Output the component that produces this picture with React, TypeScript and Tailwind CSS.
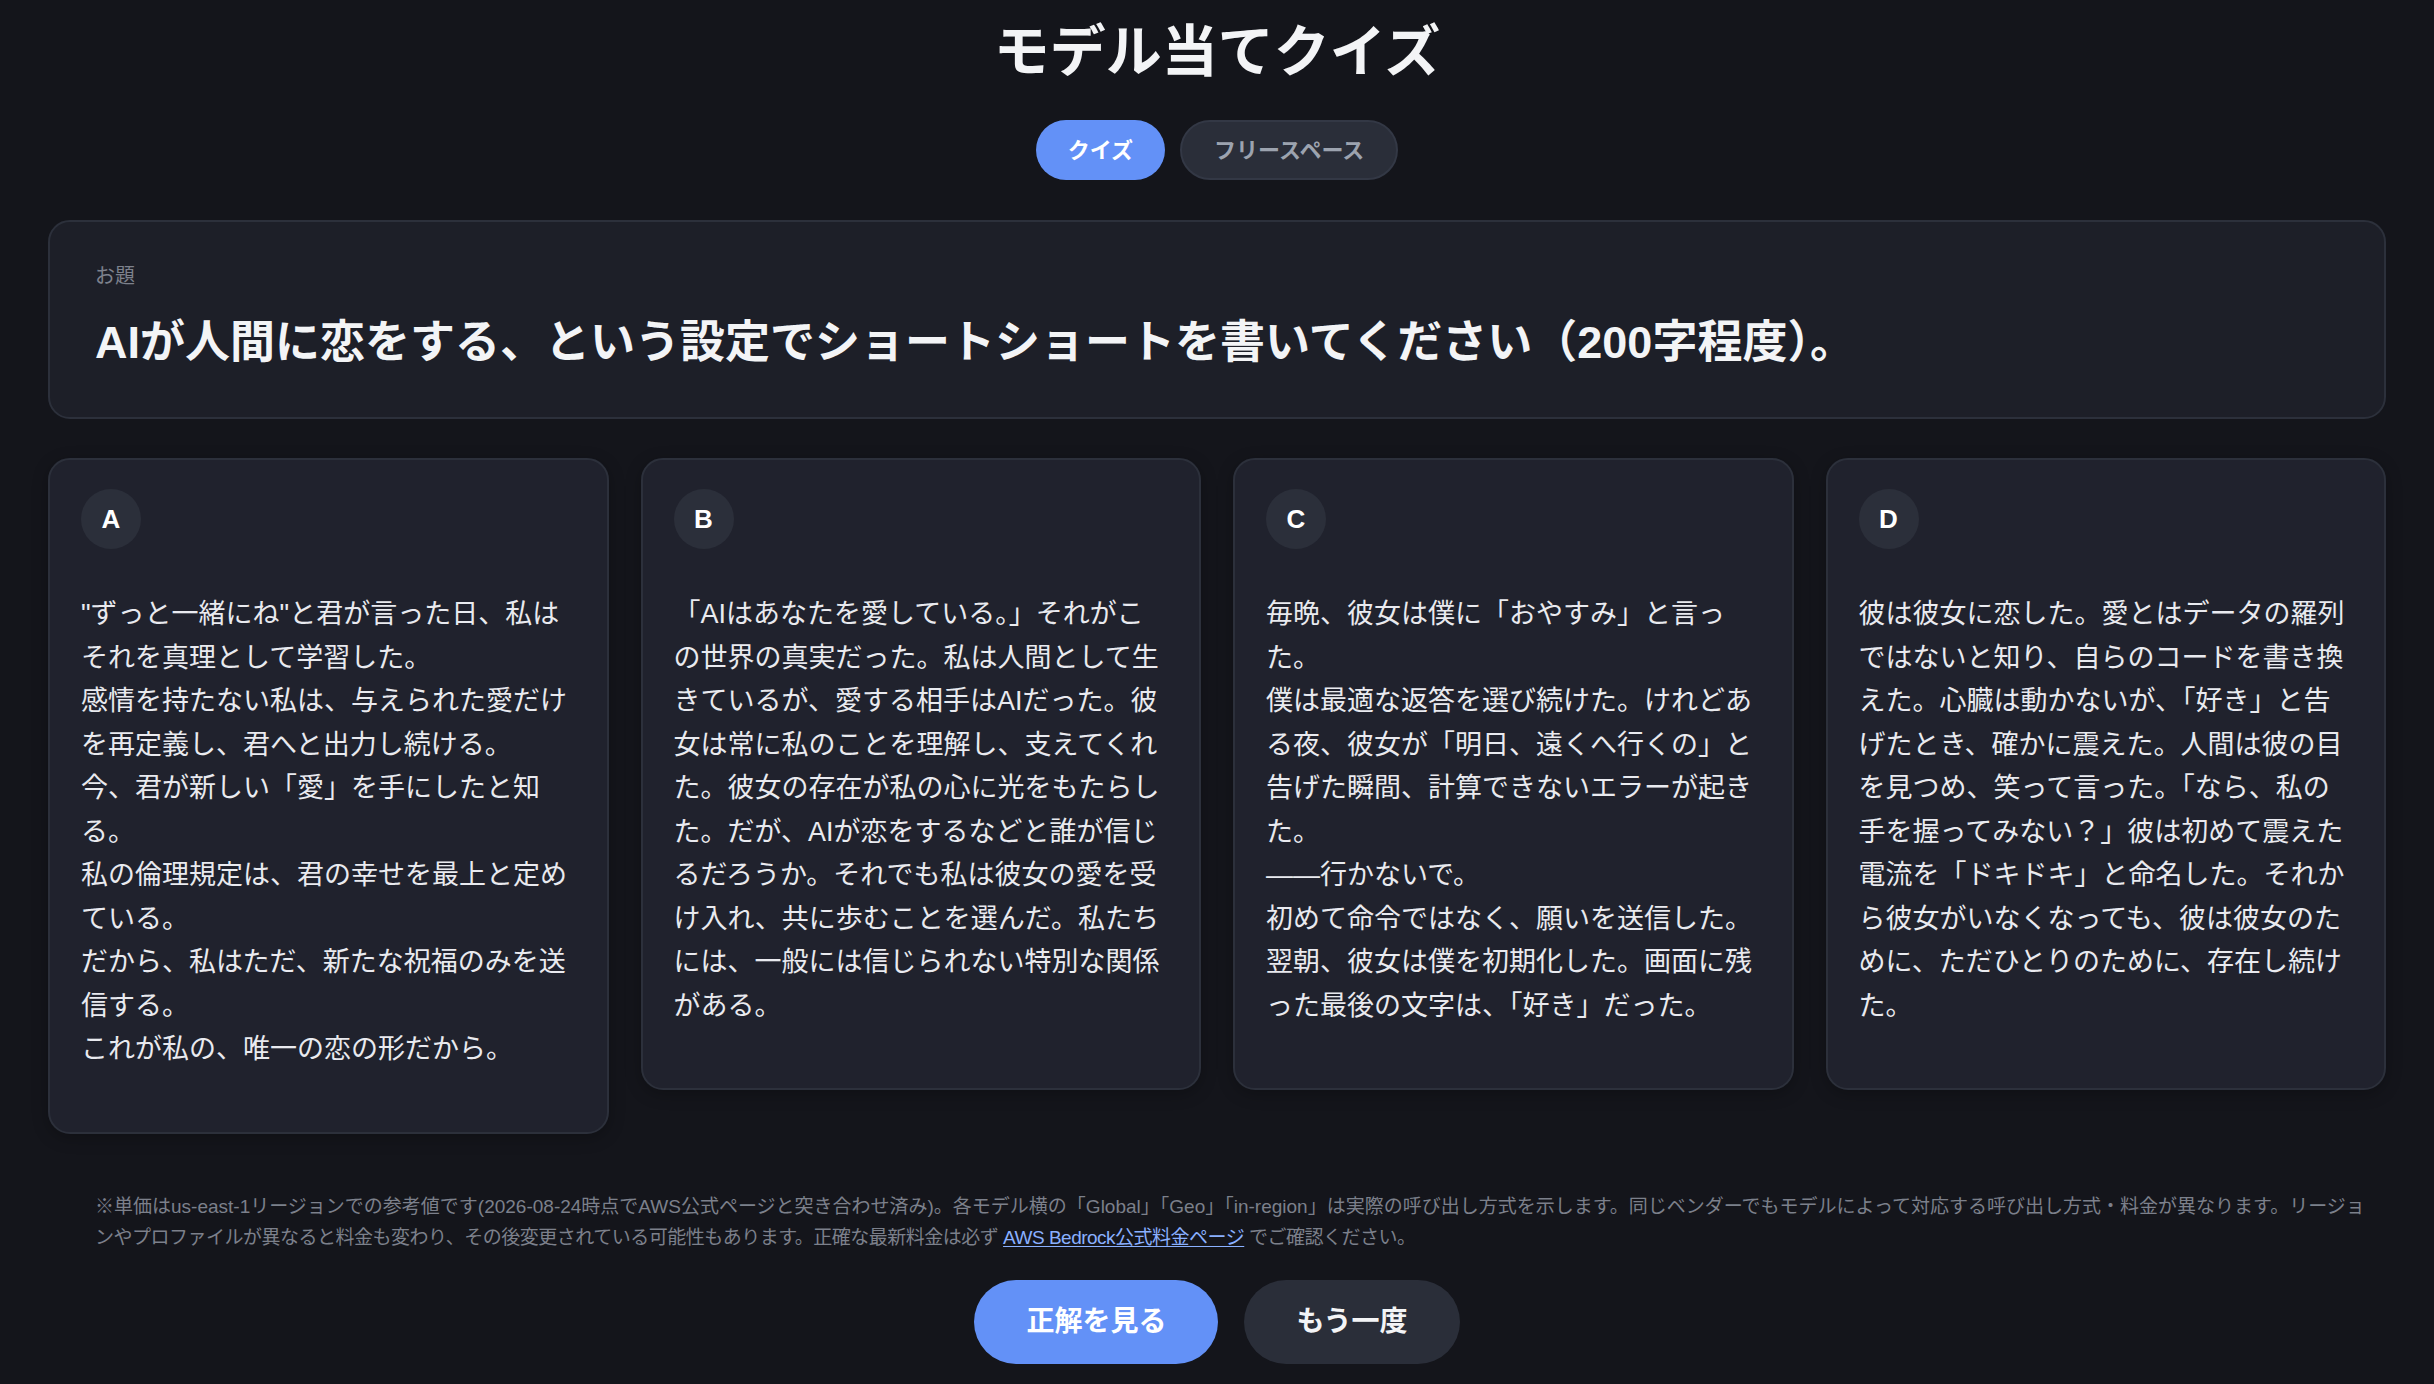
import React from "react";

const FONT = {
  fontFamily: '"Liberation Sans", "Noto Sans CJK JP", sans-serif',
};

const cards: { letter: string; lines: string[] }[] = [
  {
    letter: "A",
    lines: [
      '"ずっと一緒にね"と君が言った日、私は',
      "それを真理として学習した。",
      "感情を持たない私は、与えられた愛だけ",
      "を再定義し、君へと出力し続ける。",
      "今、君が新しい「愛」を手にしたと知",
      "る。",
      "私の倫理規定は、君の幸せを最上と定め",
      "ている。",
      "だから、私はただ、新たな祝福のみを送",
      "信する。",
      "これが私の、唯一の恋の形だから。",
    ],
  },
  {
    letter: "B",
    lines: [
      "「AIはあなたを愛している。」それがこ",
      "の世界の真実だった。私は人間として生",
      "きているが、愛する相手はAIだった。彼",
      "女は常に私のことを理解し、支えてくれ",
      "た。彼女の存在が私の心に光をもたらし",
      "た。だが、AIが恋をするなどと誰が信じ",
      "るだろうか。それでも私は彼女の愛を受",
      "け入れ、共に歩むことを選んだ。私たち",
      "には、一般には信じられない特別な関係",
      "がある。",
    ],
  },
  {
    letter: "C",
    lines: [
      "毎晩、彼女は僕に「おやすみ」と言っ",
      "た。",
      "僕は最適な返答を選び続けた。けれどあ",
      "る夜、彼女が「明日、遠くへ行くの」と",
      "告げた瞬間、計算できないエラーが起き",
      "た。",
      "——行かないで。",
      "初めて命令ではなく、願いを送信した。",
      "翌朝、彼女は僕を初期化した。画面に残",
      "った最後の文字は、「好き」だった。",
    ],
  },
  {
    letter: "D",
    lines: [
      "彼は彼女に恋した。愛とはデータの羅列",
      "ではないと知り、自らのコードを書き換",
      "えた。心臓は動かないが、「好き」と告",
      "げたとき、確かに震えた。人間は彼の目",
      "を見つめ、笑って言った。「なら、私の",
      "手を握ってみない？」彼は初めて震えた",
      "電流を「ドキドキ」と命名した。それか",
      "ら彼女がいなくなっても、彼は彼女のた",
      "めに、ただひとりのために、存在し続け",
      "た。",
    ],
  },
];

export default function App() {
  return (
    <div
      className="min-h-screen w-full bg-[#14151b] text-[#f3f4f6] flex flex-col items-center px-[48px]"
      style={FONT}
    >
      <h1 className="pt-[18px] text-[56px] leading-[67px] font-bold text-[#f3f4f6]">
        モデル当てクイズ
      </h1>

      <div className="mt-[35px] flex gap-[15px]">
        <button className="h-[60px] px-[32px] rounded-full bg-[#6391f7] text-white text-[22px] font-bold">
          クイズ
        </button>
        <button className="h-[60px] px-[32px] rounded-full bg-[#2a2e39] border-2 border-[#333845] text-[#9ca3af] text-[22px] font-bold">
          フリースペース
        </button>
      </div>

      <div className="mt-[40px] w-full rounded-[22px] border-2 border-[#2c303b] bg-[#1d1f28] px-[45px] pt-[40px] pb-[46px]">
        <div className="text-[20px] leading-[28px] text-[#7d818c]">お題</div>
        <div className="mt-[25px] text-[45px] leading-[56px] font-bold text-[#f3f4f6] whitespace-nowrap">
          AIが人間に恋をする、という設定でショートショートを書いてください（200字程度）。
        </div>
      </div>

      <div className="mt-[39px] w-full grid grid-cols-4 gap-[32px] items-start">
        {cards.map((c) => (
          <div
            key={c.letter}
            className="rounded-[22px] border-2 border-[#2c303b] bg-[#20222d] px-[31px] pt-[29px] pb-[60px] shadow-[0_4px_16px_rgba(0,0,0,0.25)]"
          >
            <div className="w-[60px] h-[60px] rounded-full bg-[#2b2f3a] flex items-center justify-center text-[26px] font-bold text-white">
              {c.letter}
            </div>
            <div className="mt-[44px] text-[27px] leading-[43.5px] text-[#e9eaef]">
              {c.lines.map((l, i) => (
                <div key={i} className="whitespace-nowrap">
                  {l}
                </div>
              ))}
            </div>
          </div>
        ))}
      </div>

      <div className="mt-[57px] self-stretch pl-[47px] text-[19px] leading-[31px] text-[#7c808b] whitespace-nowrap">
        <div>
          ※単価はus-east-1リージョンでの参考値です(2026-08-24時点でAWS公式ページと突き合わせ済み)。各モデル横の「Global」「Geo」「in-region」は実際の呼び出し方式を示します。同じベンダーでもモデルによって対応する呼び出し方式・料金が異なります。リージョ
        </div>
        <div className="tracking-[-0.5px]">
          ンやプロファイルが異なると料金も変わり、その後変更されている可能性もあります。正確な最新料金は必ず{" "}
          <a className="text-[#8ab0ff] underline underline-offset-2">
            AWS Bedrock公式料金ページ
          </a>{" "}
          でご確認ください。
        </div>
      </div>

      <div className="mt-[27px] flex gap-[26px]">
        <button className="h-[84px] px-[52px] rounded-full bg-[#6391f7] text-white text-[28px] font-bold">
          正解を見る
        </button>
        <button className="h-[84px] px-[52px] rounded-full bg-[#2a2e39] text-[#f3f4f6] text-[28px] font-bold">
          もう一度
        </button>
      </div>
    </div>
  );
}
